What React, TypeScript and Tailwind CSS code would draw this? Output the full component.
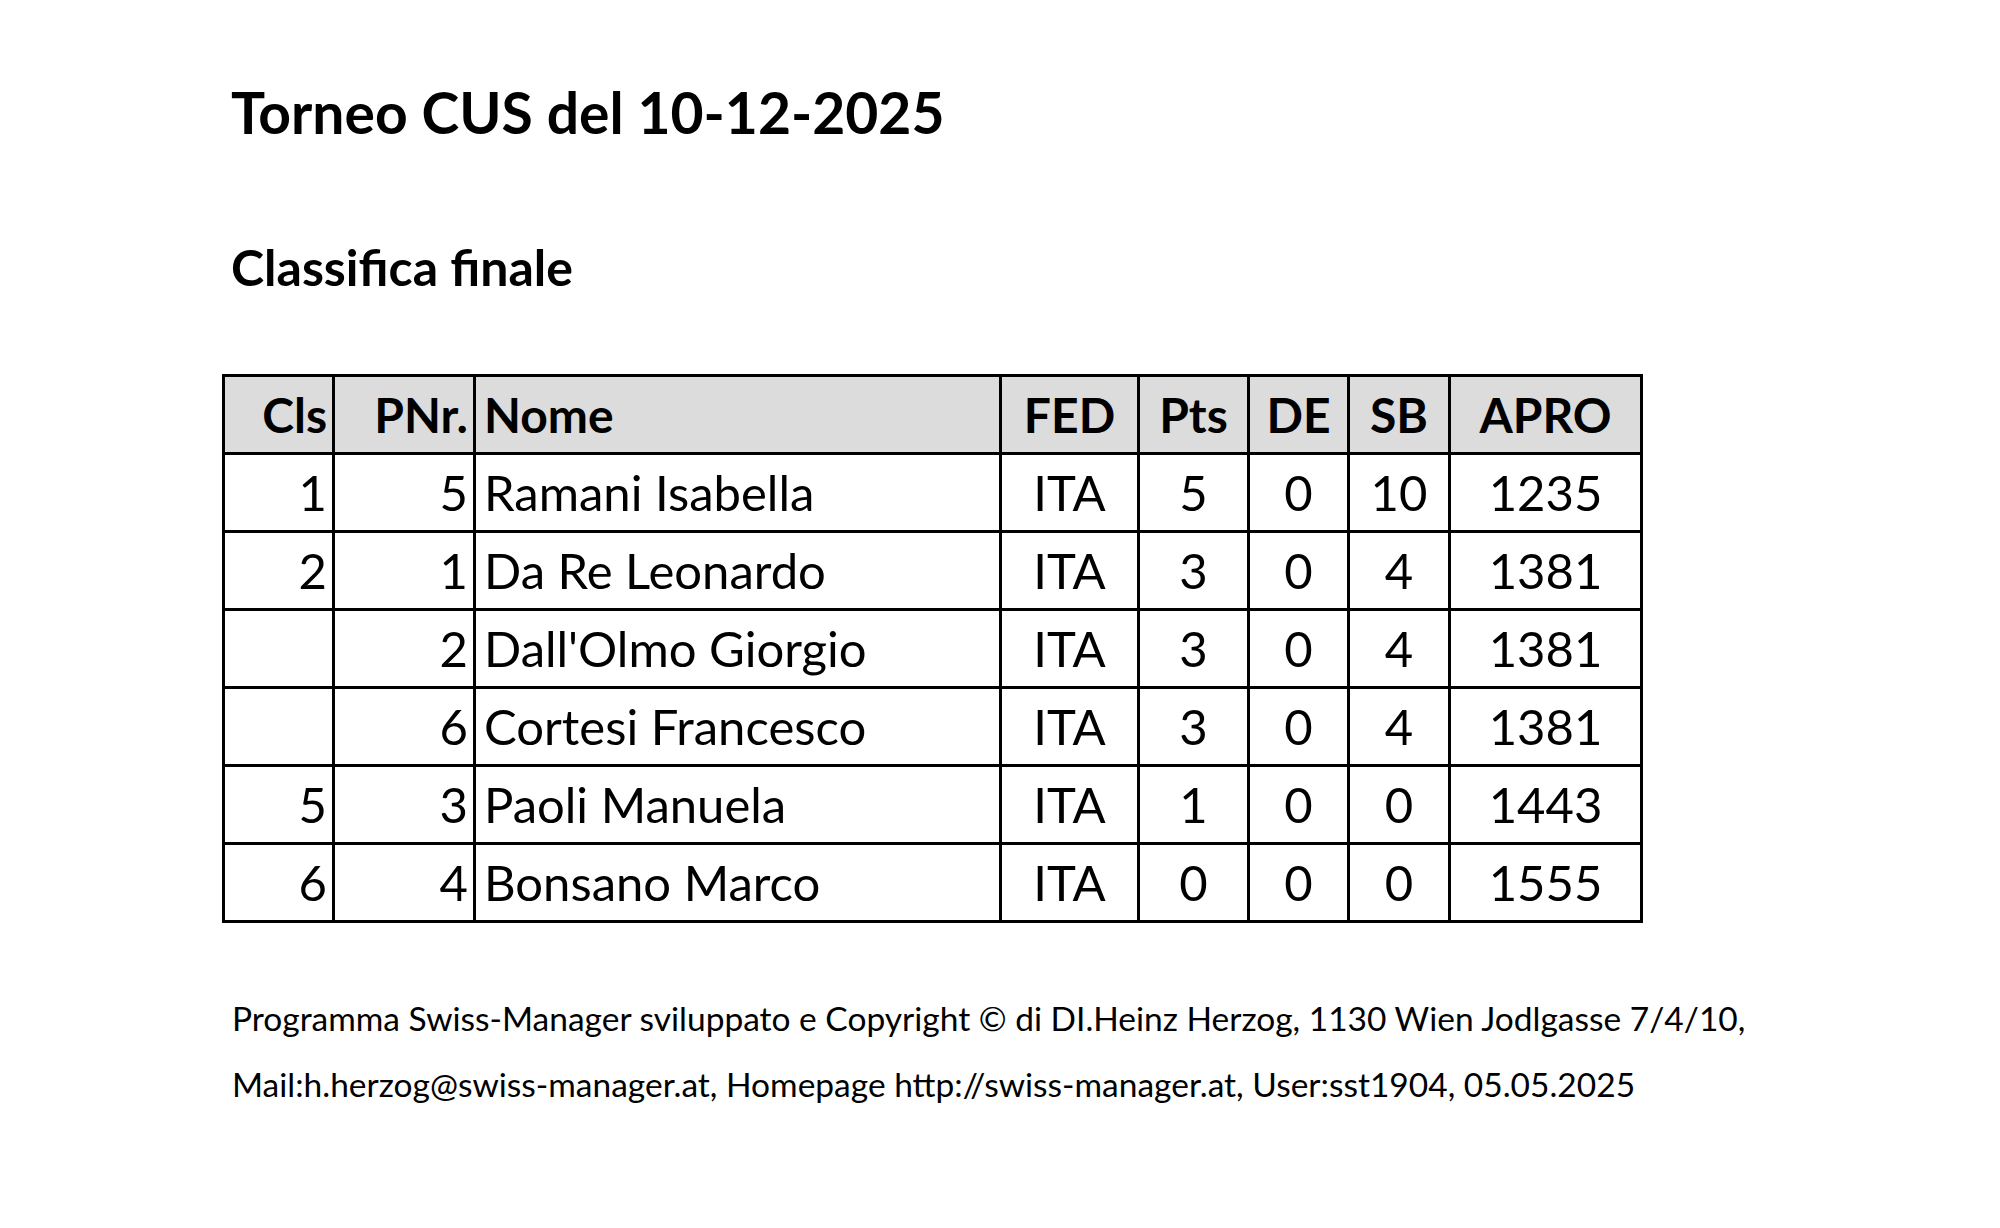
const rows = [
  { cls: "1", pnr: "5", name: "Ramani Isabella", fed: "ITA", pts: "5", de: "0", sb: "10", apro: "1235" },
  { cls: "2", pnr: "1", name: "Da Re Leonardo", fed: "ITA", pts: "3", de: "0", sb: "4", apro: "1381" },
  { cls: "", pnr: "2", name: "Dall'Olmo Giorgio", fed: "ITA", pts: "3", de: "0", sb: "4", apro: "1381" },
  { cls: "", pnr: "6", name: "Cortesi Francesco", fed: "ITA", pts: "3", de: "0", sb: "4", apro: "1381" },
  { cls: "5", pnr: "3", name: "Paoli Manuela", fed: "ITA", pts: "1", de: "0", sb: "0", apro: "1443" },
  { cls: "6", pnr: "4", name: "Bonsano Marco", fed: "ITA", pts: "0", de: "0", sb: "0", apro: "1555" },
];

const cell = "border-[3px] border-black h-[78px] p-0 leading-none";

export default function App() {
  return (
    <div
      className="min-h-[1228px] bg-white pl-[222px] pt-[84px] text-black"
      style={{ fontFamily: "Lato, 'Open Sans', sans-serif" }}
    >
      <h1 className="pl-[9px] text-[57px] font-bold leading-none">Torneo CUS del 10-12-2025</h1>
      <h2 className="mt-[101px] pl-[9px] text-[50px] font-bold leading-none">Classifica finale</h2>

      <table className="mt-[82px] w-[1418px] table-fixed border-collapse text-[49px]">
        <colgroup>
          <col className="w-[110px]" />
          <col className="w-[141px]" />
          <col className="w-[526px]" />
          <col className="w-[138px]" />
          <col className="w-[110px]" />
          <col className="w-[100px]" />
          <col className="w-[101px]" />
          <col className="w-[192px]" />
        </colgroup>
        <thead>
          <tr className="bg-[#dcdcdc] text-[48px] font-bold">
            <th className={`${cell} pr-[5px] text-right`}>Cls</th>
            <th className={`${cell} pr-[5px] text-right`}>PNr.</th>
            <th className={`${cell} pl-[8px] text-left`}>Nome</th>
            <th className={`${cell} text-center`}>FED</th>
            <th className={`${cell} text-center`}>Pts</th>
            <th className={`${cell} text-center`}>DE</th>
            <th className={`${cell} text-center`}>SB</th>
            <th className={`${cell} text-center`}>APRO</th>
          </tr>
        </thead>
        <tbody>
          {rows.map((r, i) => (
            <tr key={i}>
              <td className={`${cell} pr-[5px] text-right`}>{r.cls}</td>
              <td className={`${cell} pr-[5px] text-right`}>{r.pnr}</td>
              <td className={`${cell} pl-[8px] text-left`}>{r.name}</td>
              <td className={`${cell} text-center`}>{r.fed}</td>
              <td className={`${cell} text-center`}>{r.pts}</td>
              <td className={`${cell} text-center`}>{r.de}</td>
              <td className={`${cell} text-center`}>{r.sb}</td>
              <td className={`${cell} text-center`}>{r.apro}</td>
            </tr>
          ))}
        </tbody>
      </table>

      <div className="mt-[62px] pl-[10px] text-[33.5px] leading-[66px]">
        <p>Programma Swiss-Manager sviluppato e Copyright © di DI.Heinz Herzog, 1130 Wien Jodlgasse 7/4/10,</p>
        <p>Mail:h.herzog@swiss-manager.at, Homepage http://swiss-manager.at, User:sst1904, 05.05.2025</p>
      </div>
    </div>
  );
}
